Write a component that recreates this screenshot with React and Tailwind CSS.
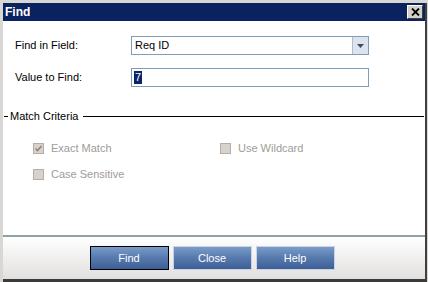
import React from "react";

const Checkbox = ({ checked, label }) => (
    <div className="flex items-center gap-[7px] h-[14px]">
        <span className="w-[11px] h-[11px] border border-[#b5aea8] bg-[#d9d2cc] flex items-center justify-center">
            {checked && (
                <svg width="9" height="9" viewBox="0 0 9 9">
                    <path d="M1.5 4.5 L3.5 6.5 L7.5 2" stroke="#8c8480" strokeWidth="1.6" fill="none" />
                </svg>
            )}
        </span>
        <span className="text-[11px] text-[#a09c98]">{label}</span>
    </div>
);

const Button = ({ children, focused }) => (
    <button
        className={`w-[79px] h-[24px] text-[11px] text-white pt-[1px] bg-gradient-to-b from-[#7b9cc8] via-[#5679ae] to-[#3d5f95] ${focused ? "border border-black" : "border border-[#c8d4e4]"}`}
    >
        {children}
    </button>
);

export default function App() {
    return (
        <div
            className="w-[428px] h-[282px] bg-[#d9d7d3] flex flex-col pl-[3px] pt-[3px] pr-[1px]"
            style={{ fontFamily: "Tahoma, 'Liberation Sans', Arial, sans-serif" }}
        >
            <div className="flex-1 flex flex-col border-r-[2px] border-[#404040] border-b-[3px] border-b-[#3a3a3a]">
                {/* Title bar */}
                <div className="h-[18px] bg-[#0a2260] flex items-center justify-between pl-[2px] pr-[2px]">
                    <span className="text-white font-bold text-[12px] leading-none">Find</span>
                    <div className="w-[16px] h-[14px] bg-[#d4d0c8] border border-t-white border-l-white border-r-[#404040] border-b-[#404040] flex items-center justify-center">
                        <svg width="9" height="8" viewBox="0 0 9 8">
                            <path d="M1 0.5 L8 7.5 M8 0.5 L1 7.5" stroke="#000" strokeWidth="1.8" />
                        </svg>
                    </div>
                </div>

                {/* Body */}
                <div className="h-[214px] bg-white flex flex-col pt-[15px]">
                    <div className="flex items-center pl-[12px] h-[19px]">
                        <span className="w-[116px] text-[11px] text-black">Find in Field:</span>
                        <div className="w-[238px] h-[19px] border border-[#7f9db9] flex items-stretch">
                            <span className="flex-1 text-[11px] pl-[3px] leading-[17px]">Req ID</span>
                            <span className="w-[16px] bg-[#dde3ec] border-l border-[#b0bccc] flex items-center justify-center">
                                <svg width="7" height="4" viewBox="0 0 7 4">
                                    <path d="M0 0 H7 L3.5 4 Z" fill="#3b4a66" />
                                </svg>
                            </span>
                        </div>
                    </div>
                    <div className="flex items-center pl-[12px] h-[19px] mt-[13px]">
                        <span className="w-[116px] text-[11px] text-black">Value to Find:</span>
                        <div className="w-[238px] h-[19px] border border-[#7f9db9] flex items-center pl-[2px]">
                            <span className="bg-[#0a246a] text-white text-[11px] leading-[13px] px-[1px]">7</span>
                        </div>
                    </div>

                    {/* Match Criteria group */}
                    <div className="flex items-center mt-[21px]">
                        <span className="w-[4px] h-[1px] bg-black ml-[1px]"></span>
                        <span className="text-[11px] text-black ml-[2px]">Match Criteria</span>
                        <span className="flex-1 h-[1px] bg-black ml-[5px] mr-[1px]"></span>
                    </div>

                    <div className="grid grid-cols-[187px_1fr] pl-[30px] mt-[17px] gap-y-[12px]">
                        <Checkbox checked label="Exact Match" />
                        <Checkbox label="Use Wildcard" />
                        <Checkbox label="Case Sensitive" />
                    </div>
                </div>

                <div className="h-[2px] bg-[#8fa2a4]"></div>

                {/* Footer */}
                <div className="flex-1 bg-gradient-to-b from-white to-[#e2e0df] flex justify-center gap-[4px] pt-[9px] pr-[4px]">
                    <Button focused>Find</Button>
                    <Button>Close</Button>
                    <Button>Help</Button>
                </div>
            </div>
        </div>
    );
}
